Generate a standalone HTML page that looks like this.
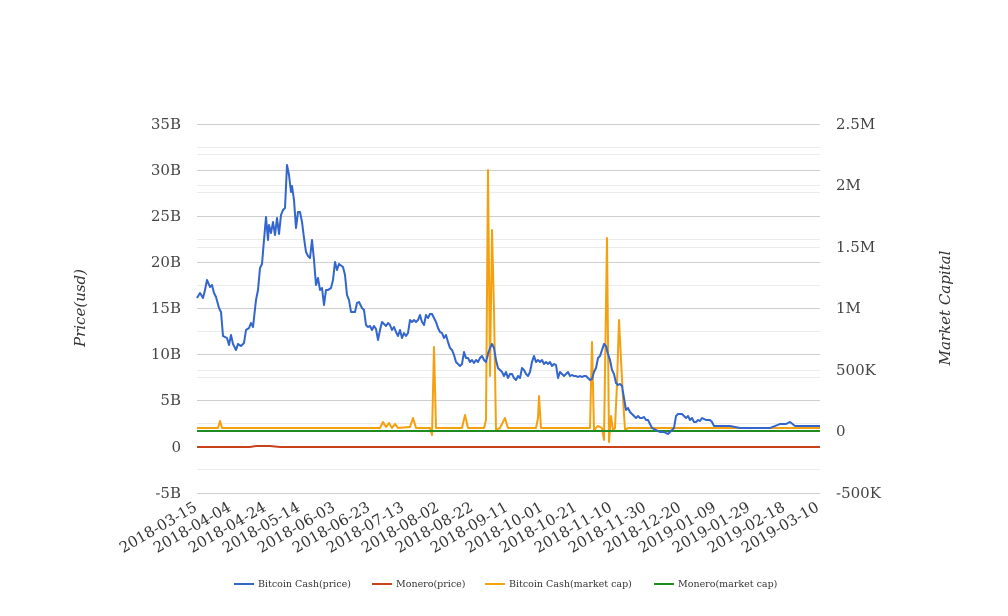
<!DOCTYPE html>
<html><head><meta charset="utf-8"><style>
html,body{margin:0;padding:0;background:#fff;}
svg{display:block;font-family:"DejaVu Serif","Liberation Serif",serif;}
</style></head><body>
<svg width="1008" height="616" viewBox="0 0 1008 616" xmlns="http://www.w3.org/2000/svg">
<g stroke="#ebebeb" stroke-width="1">
<line x1="197" x2="820" y1="147.5" y2="147.5"/><line x1="197" x2="820" y1="154.5" y2="154.5"/>
<line x1="197" x2="820" y1="185.5" y2="185.5"/><line x1="197" x2="820" y1="192.5" y2="192.5"/>
<line x1="197" x2="820" y1="239.5" y2="239.5"/><line x1="197" x2="820" y1="247.5" y2="247.5"/>
<line x1="197" x2="820" y1="285.5" y2="285.5"/><line x1="197" x2="820" y1="331.5" y2="331.5"/>
<line x1="197" x2="820" y1="370.5" y2="370.5"/><line x1="197" x2="820" y1="377.5" y2="377.5"/>
<line x1="197" x2="820" y1="423.5" y2="423.5"/><line x1="197" x2="820" y1="469.5" y2="469.5"/>
</g>
<g stroke="#cfcfcf" stroke-width="1">
<line x1="197" x2="820" y1="124.5" y2="124.5"/><line x1="197" x2="820" y1="170.5" y2="170.5"/>
<line x1="197" x2="820" y1="216.5" y2="216.5"/><line x1="197" x2="820" y1="262.5" y2="262.5"/>
<line x1="197" x2="820" y1="308.5" y2="308.5"/><line x1="197" x2="820" y1="354.5" y2="354.5"/>
<line x1="197" x2="820" y1="400.5" y2="400.5"/><line x1="197" x2="820" y1="493.5" y2="493.5"/>
</g>
<g fill="#444" font-size="15" text-anchor="end">
<text x="181" y="129">35B</text><text x="181" y="175">30B</text><text x="181" y="221">25B</text>
<text x="181" y="267">20B</text><text x="181" y="313">15B</text><text x="181" y="359">10B</text>
<text x="181" y="405">5B</text><text x="181" y="452">0</text><text x="181" y="498">-5B</text>
</g>
<g fill="#444" font-size="15">
<text x="836" y="129">2.5M</text><text x="836" y="190">2M</text><text x="836" y="252">1.5M</text>
<text x="836" y="313">1M</text><text x="836" y="375">500K</text><text x="836" y="436">0</text><text x="836" y="498">-500K</text>
</g>
<text transform="translate(85,308) rotate(-90)" text-anchor="middle" font-size="15" font-style="italic" fill="#333">Price(usd)</text>
<text transform="translate(950,308) rotate(-90)" text-anchor="middle" font-size="15" font-style="italic" fill="#333">Market Capital</text>
<g fill="#333" font-size="15" text-anchor="end">
<text transform="translate(198,510) rotate(-30)">2018-03-15</text>
<text transform="translate(232,510) rotate(-30)">2018-04-04</text>
<text transform="translate(267,510) rotate(-30)">2018-04-24</text>
<text transform="translate(301,510) rotate(-30)">2018-05-14</text>
<text transform="translate(336,510) rotate(-30)">2018-06-03</text>
<text transform="translate(371,510) rotate(-30)">2018-06-23</text>
<text transform="translate(405,510) rotate(-30)">2018-07-13</text>
<text transform="translate(440,510) rotate(-30)">2018-08-02</text>
<text transform="translate(474,510) rotate(-30)">2018-08-22</text>
<text transform="translate(509,510) rotate(-30)">2018-09-11</text>
<text transform="translate(544,510) rotate(-30)">2018-10-01</text>
<text transform="translate(578,510) rotate(-30)">2018-10-21</text>
<text transform="translate(613,510) rotate(-30)">2018-11-10</text>
<text transform="translate(647,510) rotate(-30)">2018-11-30</text>
<text transform="translate(682,510) rotate(-30)">2018-12-20</text>
<text transform="translate(717,510) rotate(-30)">2019-01-09</text>
<text transform="translate(751,510) rotate(-30)">2019-01-29</text>
<text transform="translate(786,510) rotate(-30)">2019-02-18</text>
<text transform="translate(820,510) rotate(-30)">2019-03-10</text>
</g>
<polyline fill="none" stroke="#c8421c" stroke-width="2" points="197,447 250,447 256,446 270,446 280,447 820,447"/>
<polyline fill="none" stroke="#f5a00f" stroke-width="2" stroke-linejoin="round" points="197,428 218,428 220,421 222,428 380,428 383,422 386,427 389,423 392,428 395,424 398,428 410,427 413,418 416,428 430,428 432,435 434,347 436,428 462,428 465,415 468,428 484,428 486,420 488,170 490,376 492,230 494,310 496,430 500,428 505,418 508,428 536,428 538,418 539,396 541,428 590,428 592,342 594,430 598,426 602,428 604,440 607,238 609,442 611,416 613,430 615,428 617,384 619,320 621,360 623,398 625,430 628,428 820,428"/>
<polyline fill="none" stroke="#1f8c1f" stroke-width="2" points="197,431 820,431"/>
<polyline fill="none" stroke="#3366cc" stroke-width="2" stroke-linejoin="round" points="197,298 200,293 203,298 205,290 207,280 210,287 212,285 214,293 216,297 219,308 221,312 223,336 227,338 229,345 231,335 233,344 236,350 238,344 241,346 244,343 246,330 249,328 251,323 253,327 256,300 258,290 260,268 262,264 264,240 266,217 268,240 269,225 271,233 273,222 275,235 277,218 279,234 281,215 283,210 285,208 287,165 289,175 291,192 292,186 294,200 296,228 298,212 300,212 302,222 304,238 306,252 308,256 310,258 312,240 314,260 316,285 318,278 320,290 322,288 324,305 326,290 328,290 331,288 333,280 335,262 337,270 339,264 343,267 345,275 347,295 349,300 351,312 355,312 357,303 359,302 362,308 364,310 366,325 368,327 370,326 372,330 374,326 376,329 378,340 380,330 382,322 384,324 386,326 388,323 390,325 392,330 394,327 396,332 398,336 400,330 402,338 404,333 406,336 408,333 410,320 412,322 414,320 416,322 418,320 420,315 422,322 424,325 426,315 428,318 430,314 432,314 434,318 436,322 438,328 440,332 442,333 444,338 446,335 448,342 450,348 452,350 454,355 456,362 458,364 460,366 462,364 464,352 466,358 468,358 470,362 472,360 474,363 476,360 478,362 480,358 482,356 484,360 486,362 488,354 490,348 492,344 494,348 496,360 498,368 500,370 502,372 504,376 506,372 508,378 510,374 512,374 514,378 516,380 518,376 520,378 522,368 524,370 526,374 528,376 530,372 532,362 534,356 536,362 538,360 540,362 542,360 544,364 546,362 548,364 550,362 552,366 554,364 556,365 558,378 560,372 562,374 564,376 566,374 568,372 570,376 572,375 574,376 576,376 578,377 580,376 582,377 584,376 586,376 588,378 590,380 592,379 594,372 596,368 598,358 600,356 602,350 604,344 606,346 608,354 610,360 612,370 614,374 616,383 618,385 620,384 622,386 624,398 626,410 628,408 630,412 632,414 634,416 636,418 638,416 640,418 642,418 644,417 646,420 648,420 650,424 652,428 656,430 660,432 664,432 668,434 670,432 674,428 676,416 678,414 682,414 686,418 688,416 690,420 692,418 694,422 696,422 698,420 700,421 702,418 706,420 710,420 712,422 714,426 720,426 730,426 740,428 750,428 760,428 770,428 780,424 786,424 790,422 795,426 800,426 810,426 820,426"/>
<g font-size="9.5" fill="#333">
<line x1="234" x2="254" y1="584" y2="584" stroke="#3366cc" stroke-width="2"/><text x="258" y="587">Bitcoin Cash(price)</text>
<line x1="372" x2="392" y1="584" y2="584" stroke="#c8421c" stroke-width="2"/><text x="396" y="587">Monero(price)</text>
<line x1="485" x2="505" y1="584" y2="584" stroke="#f5a00f" stroke-width="2"/><text x="509" y="587">Bitcoin Cash(market cap)</text>
<line x1="654" x2="674" y1="584" y2="584" stroke="#1f8c1f" stroke-width="2"/><text x="678" y="587">Monero(market cap)</text>
</g>
</svg>
</body></html>
